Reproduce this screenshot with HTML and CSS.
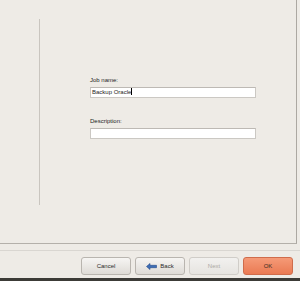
FILE: index.html
```html
<!DOCTYPE html>
<html lang="en">
<head>
  <meta charset="UTF-8" />
  <title>New Job</title>
  <link rel="stylesheet" href="styles.css">
</head>
<body>
  <div class="page">
    <div class="frame">
      <div class="divider"></div>
      <div class="form">
        <div class="field">
          <div class="label">Job name:</div>
          <div class="textbox">Backup Oracle<span class="caret"></span></div>
        </div>
        <div class="field field-desc">
          <div class="label">Description:</div>
          <div class="textbox"></div>
        </div>
      </div>
    </div>

    <div class="footer">
      <button class="btn">Cancel</button>
      <button class="btn btn-back">
        <svg width="11" height="7" viewBox="0 0 11 7">
          <path d="M0.5 3.5 L4 0.5 L4 2.3 L10.5 2.3 L10.5 4.7 L4 4.7 L4 6.5 Z" fill="#3d6db5" stroke="#24498a" stroke-width="0.6" stroke-linejoin="round"/>
        </svg>
        Back
      </button>
      <button class="btn btn-disabled" disabled>Next</button>
      <button class="btn btn-ok">OK</button>
    </div>
    <div class="bottom-bar"></div>
  </div>
</body>
</html>
```

FILE: styles.css
```css
body {
  margin: 0;
  background: #eeebe6;
  font-family: "Liberation Sans", Arial, sans-serif;
  font-size: 6px;
  color: #1c1c1c;
}
.page {
  width: 300px;
  height: 281px;
  overflow: hidden;
}
.frame {
  display: flex;
  width: 296px;
  height: 243px;
  border-right: 1px solid #aca8a2;
  border-bottom: 1px solid #b4b0aa;
}
.divider {
  width: 1px;
  height: 186px;
  margin: 19px 0 0 39px;
  background: #c9c5bf;
}
.form {
  margin-left: 50px;
  padding-top: 76px;
  width: 166px;
}
.label {
  line-height: 8px;
  margin-bottom: 3px;
}
.field-desc {
  margin-top: 19px;
}
.textbox {
  box-sizing: border-box;
  height: 11px;
  line-height: 9px;
  padding: 0 1px;
  background: #fff;
  border: 1px solid #cbc8c3;
  border-top-color: #bdb9b4;
  white-space: nowrap;
}
.caret {
  display: inline-block;
  width: 1px;
  height: 7px;
  background: #000;
  vertical-align: -1px;
}
.footer {
  display: flex;
  justify-content: flex-end;
  gap: 4px;
  margin-top: 6px;
  padding: 6px 7px 3px 0;
  border-top: 1px solid #d9d6d1;
}
.btn {
  box-sizing: border-box;
  width: 50px;
  height: 18px;
  padding: 0;
  display: flex;
  align-items: center;
  justify-content: center;
  gap: 3px;
  font-family: "Liberation Sans", Arial, sans-serif;
  font-size: 6px;
  color: #2a2a2a;
  background: linear-gradient(#f6f5f3, #dedbd6);
  border: 1px solid #b9b5af;
  border-radius: 3px;
}
.btn-disabled {
  color: #aba8a3;
  background: linear-gradient(#f2f1ef, #e6e4e0);
  border-color: #d0cdc8;
}
.btn-ok {
  background: linear-gradient(#f59a77, #ea7a53);
  border-color: #cf6c4b;
  color: #3a2a22;
}
.bottom-bar {
  height: 3px;
  background: #3c3b37;
}
```
